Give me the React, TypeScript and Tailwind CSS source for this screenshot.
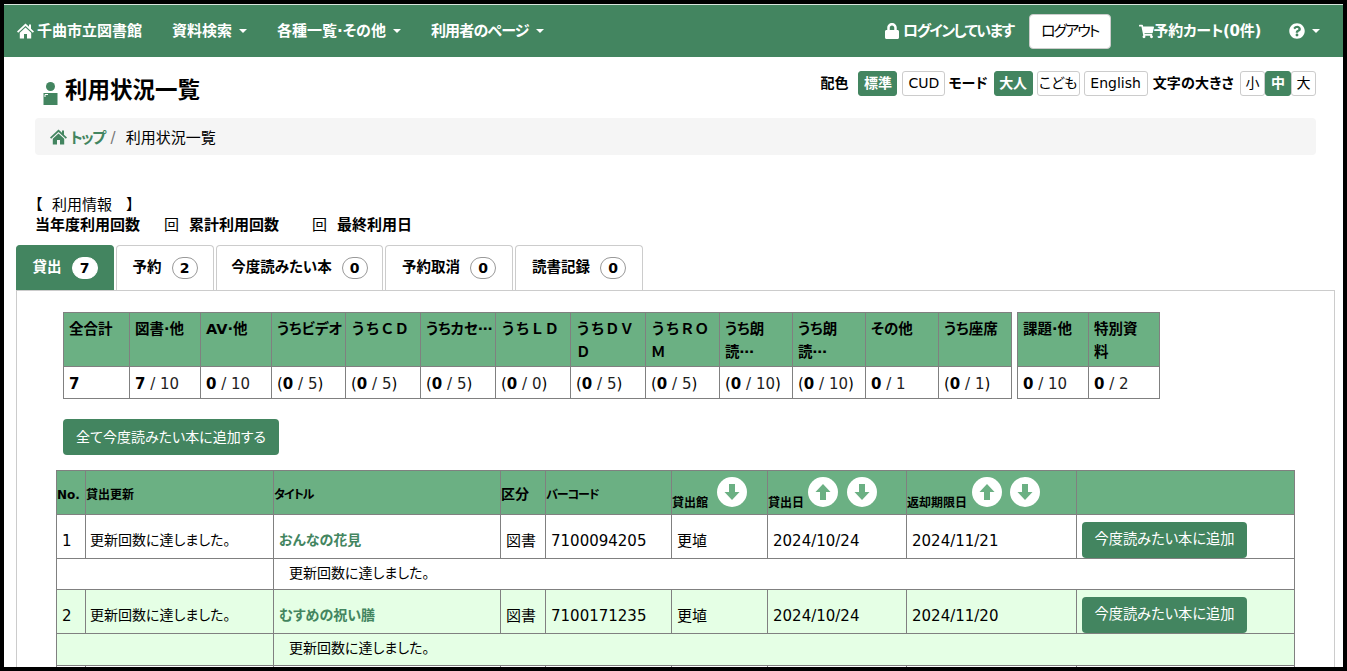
import type { ReactNode } from 'react'
import { FaLock, FaShoppingCart, FaQuestionCircle } from 'react-icons/fa'

const GREEN = 'bg-[#438560]'

function HomeIcon({ className }: { className: string }) {
  return (
    <svg width="17" height="16" viewBox="0 0 17 16" className={className} fill="currentColor">
      <path d="M8.5 0.5L0 8.5L1.2 9.7L8.5 2.9L15.8 9.7L17 8.5L14 5.7V1.5H12V3.8Z" />
      <path d="M8.5 4.4L2.8 9.7V15.5H7V11H10V15.5H14.2V9.7Z" />
    </svg>
  )
}

function Caret() {
  return <span className="ml-[7px] inline-block border-x-[4px] border-t-[4px] border-x-transparent border-t-white align-middle" />
}

function NavItem({ label, tight }: { label: string; tight?: boolean }) {
  return (
    <span className={`flex items-center text-[15px] font-bold text-white ${tight ? 'tracking-[-0.8px]' : ''}`}>
      {label}
      <Caret />
    </span>
  )
}

function ToggleBtn({ label, active, w }: { label: string; active?: boolean; w: string }) {
  return (
    <span
      className={`flex h-[25px] items-center justify-center rounded-[3px] border text-[14px] ${w} ${
        active ? 'border-[#438560] bg-[#438560] font-bold text-white' : 'border-[#ccc] bg-white font-normal text-black'
      }`}
    >
      {label}
    </span>
  )
}

function PersonIcon() {
  return (
    <svg width="15" height="23" viewBox="0 0 15 23" className="mr-[8px] mt-[8px]">
      <circle cx="7.5" cy="4.5" r="4.5" fill="#438560" />
      <rect x="0.5" y="11" width="14" height="12" fill="#438560" />
      <path d="M2 15V12.5H5" stroke="#fff" strokeWidth="1" fill="none" />
    </svg>
  )
}

function Tab({ label, count, active, w }: { label: string; count: number; active?: boolean; w: string }) {
  return (
    <div
      className={`flex h-[45px] items-center justify-center gap-[10px] rounded-t-[4px] border border-b-0 text-[14.5px] font-bold ${w} ${
        active ? 'border-[#438560] bg-[#438560] text-white' : 'border-[#ccc] bg-white text-black'
      }`}
    >
      <span>{label}</span>
      <span
        className={`flex h-[22px] w-[26px] items-center justify-center rounded-[11px] border text-[14px] text-black ${
          active ? 'border-white bg-white' : 'border-[#999] bg-white'
        }`}
      >
        {count}
      </span>
    </div>
  )
}

function SortIcon({ dir }: { dir: 'up' | 'down' }) {
  return (
    <svg width="30" height="30" viewBox="0 0 30 30" className="shrink-0">
      <circle cx="15" cy="15" r="15" fill="#fff" />
      {dir === 'down' ? (
        <path d="M12 7H18V15H22.5L15 23L7.5 15H12Z" fill="#6bb083" />
      ) : (
        <path d="M12 23H18V15H22.5L15 7L7.5 15H12Z" fill="#6bb083" />
      )}
    </svg>
  )
}

function Amount({ n, max, paren }: { n: number; max: number; paren?: boolean }) {
  return (
    <>
      {paren && '('}
      <b>{n}</b>
      <span className="text-[#222]"> / {max}</span>
      {paren && ')'}
    </>
  )
}

type UsageCol = { w: string; head: ReactNode; val: ReactNode; cls?: string }

const FULL_WIDTH = '[font-feature-settings:normal]'

const USAGE: UsageCol[] = [
  { w: 'w-[66px]', head: '全合計', val: <b>7</b> },
  { w: 'w-[71px]', head: '図書·他', val: <Amount n={7} max={10} /> },
  { w: 'w-[71px]', head: 'AV·他', val: <Amount n={0} max={10} /> },
  { w: 'w-[74px]', head: 'うちビデオ', val: <Amount n={0} max={5} paren />, cls: 'whitespace-nowrap' },
  { w: 'w-[75px]', head: 'うちＣＤ', val: <Amount n={0} max={5} paren />, cls: FULL_WIDTH },
  { w: 'w-[75px]', head: 'うちカセ⋯', val: <Amount n={0} max={5} paren />, cls: 'whitespace-nowrap' },
  { w: 'w-[75px]', head: 'うちＬＤ', val: <Amount n={0} max={0} paren />, cls: FULL_WIDTH },
  { w: 'w-[75px]', head: 'うちＤＶＤ', val: <Amount n={0} max={5} paren />, cls: FULL_WIDTH },
  { w: 'w-[74px]', head: 'うちＲＯＭ', val: <Amount n={0} max={5} paren />, cls: FULL_WIDTH },
  { w: 'w-[73px]', head: 'うち朗読⋯', val: <Amount n={0} max={10} paren /> },
  { w: 'w-[73px]', head: 'うち朗読⋯', val: <Amount n={0} max={10} paren /> },
  { w: 'w-[73px]', head: 'その他', val: <Amount n={0} max={1} /> },
  { w: 'w-[73px]', head: 'うち座席', val: <Amount n={0} max={1} paren /> },
]

const EXTRA: UsageCol[] = [
  { w: 'w-[71px]', head: '課題·他', val: <Amount n={0} max={10} /> },
  { w: 'w-[71px]', head: <>特別資<br />料</>, val: <Amount n={0} max={2} /> },
]

function UsageTable({ cols, width }: { cols: UsageCol[]; width: string }) {
  return (
    <table className={`table-fixed border-b border-l border-[#808080] ${width}`}>
      <colgroup>
        {cols.map((c, i) => (
          <col key={i} className={c.w} />
        ))}
      </colgroup>
      <tbody>
        <tr className="h-[54px] bg-[#6bb083]">
          {cols.map((c, i) => (
            <th key={i} className={`border-r border-t border-[#808080] px-[5px] pt-[5px] text-left align-top text-[14.5px] font-bold leading-[23px] text-black ${c.cls ?? ''}`}>
              {c.head}
            </th>
          ))}
        </tr>
        <tr className="h-[32px] bg-white">
          {cols.map((c, i) => (
            <td key={i} className="whitespace-nowrap border-r border-t border-[#808080] px-[5px] pt-[3px] text-[15px] leading-none text-black">
              {c.val}
            </td>
          ))}
        </tr>
      </tbody>
    </table>
  )
}

const LOANS = [
  { no: 1, title: 'おんなの花見', barcode: '7100094205', lent: '2024/10/24', due: '2024/11/21' },
  { no: 2, title: 'むすめの祝い膳', barcode: '7100171235', lent: '2024/10/24', due: '2024/11/20' },
]

const CELL = 'border border-[#808080] px-[5px] text-black'
const MAIN = `${CELL} pt-[10px] text-[15px]`
const HEAD = 'border border-[#808080] p-0 pt-[4px] text-left align-middle font-bold text-black'

function LoanRows({ row, tint, noteHeight }: { row: (typeof LOANS)[number]; tint: string; noteHeight: string }) {
  return (
    <>
      <tr className={`h-[44px] ${tint}`}>
        <td className={MAIN}>{row.no}</td>
        <td className={`${CELL} whitespace-nowrap !pl-[4px] pt-[8px] text-[14px]`}>更新回数に達しました。</td>
        <td className={`${CELL} pt-[8px] text-[14px] font-bold !text-[#438560]`}>{row.title}</td>
        <td className={MAIN}>図書</td>
        <td className={MAIN}>{row.barcode}</td>
        <td className={MAIN}>更埴</td>
        <td className={MAIN}>{row.lent}</td>
        <td className={MAIN}>{row.due}</td>
        <td className={`${CELL} align-bottom text-[15px]`}>
          <button className={`flex h-[36px] w-[165px] items-center justify-center rounded-[4px] ${GREEN} text-[14.25px] text-white`}>
            今度読みたい本に追加
          </button>
        </td>
      </tr>
      <tr className={`${noteHeight} ${tint}`}>
        <td colSpan={2} className={CELL} />
        <td colSpan={7} className={`${CELL} pb-[2px] pl-[15px] text-[14px]`}>
          更新回数に達しました。
        </td>
      </tr>
    </>
  )
}

export default function App() {
  return (
    <div className="h-[671px] w-[1347px] overflow-hidden bg-black pb-[4px] pl-[4px] pr-[4px] pt-[4px] [font-family:'DejaVu_Sans','Noto_Sans_CJK_JP',sans-serif] [font-feature-settings:'palt']">
      <div className="h-[663px] overflow-hidden bg-white">
        {/* navbar */}
        <header className={`flex h-[53px] items-center border-t border-[#d8e6dd] pl-[13px] pr-[23px] ${GREEN}`}>
          <span className="flex items-center text-[15px] font-bold text-white">
            <HomeIcon className="mr-[3px]" />
            千曲市立図書館
          </span>
          <div className="ml-[30px] flex gap-[30px]">
            <NavItem label="資料検索" />
            <NavItem label="各種一覧·その他" />
            <NavItem label="利用者のページ" tight />
          </div>
          <div className="ml-auto flex items-center">
            <span className="flex items-center text-[15px] font-bold tracking-[-1.5px] text-white">
              <FaLock className="mr-[3px] text-[16px]" />
              ログインしています
            </span>
            <span className="ml-[15px] flex h-[35px] w-[82px] items-center justify-center rounded-[4px] border border-[#ccc] bg-white text-[15px] tracking-[-2px] text-black">
              ログアウト
            </span>
            <span className="ml-[28px] flex items-center text-[15px] font-bold tracking-[-0.3px] text-white">
              <FaShoppingCart className="text-[15px]" />
              予約カート(0件)
            </span>
            <span className="ml-[28px] flex items-center text-white">
              <FaQuestionCircle className="text-[16px]" />
              <Caret />
            </span>
          </div>
        </header>

        <main className="pl-[31px] pr-[27px]">
          <div className="flex h-[61px] items-start justify-between">
            <h1 className="ml-[8px] mt-[17px] flex text-[22.5px] font-bold leading-[32px] text-black">
              <PersonIcon />
              <span className="ml-[-1px]">利用状況一覧</span>
            </h1>
            <div className="mt-[14px] flex items-center text-[14px] font-bold text-black">
              <span className="mr-[10px]">配色</span>
              <div className="flex gap-[5px]">
                <ToggleBtn label="標準" active w="w-[39px]" />
                <ToggleBtn label="CUD" w="w-[43px]" />
              </div>
              <span className="ml-[3px] mr-[6px]">モード</span>
              <div className="flex gap-[4px]">
                <ToggleBtn label="大人" active w="w-[39px]" />
                <ToggleBtn label="こども" w="w-[43px]" />
                <ToggleBtn label="English" w="w-[64px]" />
              </div>
              <span className="ml-[5px] mr-[6px] tracking-[0.2px]">文字の大きさ</span>
              <div className="flex">
                <ToggleBtn label="小" w="w-[25px]" />
                <ToggleBtn label="中" active w="w-[26px]" />
                <ToggleBtn label="大" w="w-[25px]" />
              </div>
            </div>
          </div>

          <nav className="flex h-[37px] items-center rounded-[4px] bg-[#f5f5f5] pl-[15px] text-[15px] text-black">
            <HomeIcon className="mr-[3px] text-[#438560]" />
            <span className="pt-[3px] font-bold tracking-[-1.5px] text-[#438560]">トップ</span>
            <span className="ml-[6px] mr-[10px] pt-[3px] text-[#777]">/</span>
            <span className="pt-[3px]">利用状況一覧</span>
          </nav>

          <div className="mt-[40px] text-[15px] leading-[20px] text-black">
            <div>【 &nbsp;利用情報 &nbsp;&nbsp;】</div>
            <div className="flex font-bold">
              <span>当年度利用回数</span>
              <span className="ml-[24px] font-normal">回</span>
              <span className="ml-[10px]">累計利用回数</span>
              <span className="ml-[33px] font-normal">回</span>
              <span className="ml-[10px]">最終利用日</span>
            </div>
          </div>
        </main>

        <section className="ml-[12px] mr-[8px] mt-[10px]">
          <div className="flex gap-[2px]">
            <Tab label="貸出" count={7} active w="w-[98px]" />
            <Tab label="予約" count={2} w="w-[98px]" />
            <Tab label="今度読みたい本" count={0} w="w-[167px]" />
            <Tab label="予約取消" count={0} w="w-[128px]" />
            <Tab label="読書記録" count={0} w="w-[128px]" />
          </div>
          <div className="border-x border-t border-[#ccc] pb-[20px] pl-[39px] pr-[39px] pt-[21px]">
            <div className="ml-[7px] flex gap-[5px]">
              <UsageTable cols={USAGE} width="w-[949px]" />
              <UsageTable cols={EXTRA} width="w-[143px]" />
            </div>
            <button className={`ml-[7px] mt-[20px] flex h-[36px] w-[216px] items-center justify-center rounded-[4px] ${GREEN} text-[14px] text-white`}>
              全て今度読みたい本に追加する
            </button>
            <table className="mt-[15px] w-[1238px] table-fixed">
              <colgroup>
                <col className="w-[29px]" />
                <col className="w-[188px]" />
                <col className="w-[227px]" />
                <col className="w-[45px]" />
                <col className="w-[126px]" />
                <col className="w-[96px]" />
                <col className="w-[139px]" />
                <col className="w-[170px]" />
                <col className="w-[218px]" />
              </colgroup>
              <tbody>
                <tr className="h-[44px] bg-[#6bb083] text-[12px]">
                  <th className={HEAD}>No.</th>
                  <th className={HEAD}>貸出更新</th>
                  <th className={`${HEAD} tracking-[-1px]`}>タイトル</th>
                  <th className={`${HEAD} text-[14px]`}>区分</th>
                  <th className={`${HEAD} tracking-[-1px]`}>バーコード</th>
                  <th className={HEAD}>
                    <div className="flex items-end gap-[9px] pb-[6px]">
                      <span className="mb-[-5px]">貸出館</span>
                      <SortIcon dir="down" />
                    </div>
                  </th>
                  <th className={HEAD}>
                    <div className="flex items-end pb-[6px]">
                      <span className="mb-[-5px] mr-[4px]">貸出日</span>
                      <SortIcon dir="up" />
                      <span className="w-[9px]" />
                      <SortIcon dir="down" />
                    </div>
                  </th>
                  <th className={HEAD}>
                    <div className="flex items-end pb-[6px]">
                      <span className="mb-[-5px] mr-[5px]">返却期限日</span>
                      <SortIcon dir="up" />
                      <span className="w-[8px]" />
                      <SortIcon dir="down" />
                    </div>
                  </th>
                  <th className={HEAD} />
                </tr>
                <LoanRows row={LOANS[0]} tint="bg-white" noteHeight="h-[31px]" />
                <LoanRows row={LOANS[1]} tint="bg-[#e5ffe5]" noteHeight="h-[32px]" />
                <tr className="h-[44px] bg-white">
                  {Array.from({ length: 9 }, (_, i) => (
                    <td key={i} className={CELL} />
                  ))}
                </tr>
              </tbody>
            </table>
          </div>
        </section>
      </div>
    </div>
  )
}
